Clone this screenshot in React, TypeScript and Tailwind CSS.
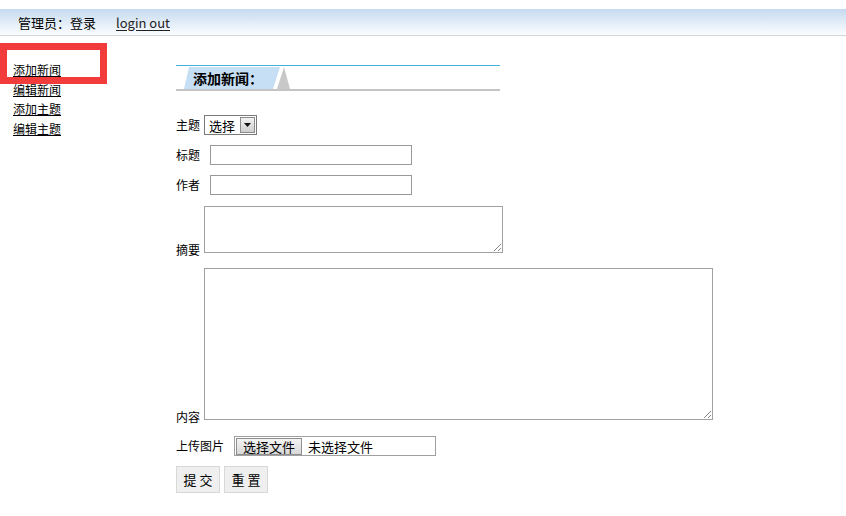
import React from "react";

const font = { fontFamily: '"Noto Sans CJK SC", "Liberation Sans", sans-serif' };

const App = () => {
  return (
    <div className="relative w-[846px] h-[516px] bg-white text-[12px] text-black leading-none" style={font}>
      {/* top bar */}
      <div className="pt-[9px]">
        <div className="h-[27px] flex items-center pl-[18px] gap-[20px] text-[13px] bg-gradient-to-b from-[#c6daef] to-[#fbfdff] border-b border-[#d4d4d4]">
          <span>管理员：登录</span>
          <a href="#" className="underline underline-offset-[2px] text-[#222]">login out</a>
        </div>
      </div>

      <div className="flex">
        {/* sidebar */}
        <div className="w-[176px] pl-[13px] pt-[28px] flex flex-col gap-[7.5px]">
          <a href="#" className="underline underline-offset-[1px] h-[12px]">添加新闻</a>
          <a href="#" className="underline underline-offset-[1px] h-[12px]">编辑新闻</a>
          <a href="#" className="underline underline-offset-[1px] h-[12px]">添加主题</a>
          <a href="#" className="underline underline-offset-[1px] h-[12px]">编辑主题</a>
        </div>

        {/* main */}
        <div className="pt-[29px] flex flex-col">
          <div className="w-[324px] h-[26px] border-t border-b-2 border-t-[#48b0d8] border-b-[#c4c4c4] relative">
            <svg className="absolute left-0 top-[1px]" width="324" height="22">
              <polygon points="13,0 104,0 97,22 8,22" fill="#c6dff4" />
              <polygon points="108,0 114,22 101,22" fill="#c8c8c8" />
            </svg>
            <span className="absolute left-[17px] top-[5px] font-bold text-[14px]">添加新闻：</span>
          </div>

          <div className="mt-[24px] flex items-center h-[20px]">
            <span>主题</span>
            <div className="ml-[4px] w-[53px] h-[20px] border border-[#7a7a7a] flex items-center text-[13px]">
              <span className="pl-[4px] flex-1">选择</span>
              <div className="w-[15px] h-[16px] mr-[1px] bg-gradient-to-b from-[#f2f2f2] to-[#cfcfcf] border border-[#8a8a8a] flex items-center justify-center">
                <svg width="7" height="4"><polygon points="0,0 7,0 3.5,4" fill="#111" /></svg>
              </div>
            </div>
          </div>

          <div className="mt-[10px] flex items-center h-[20px]">
            <span>标题</span>
            <div className="ml-[10px] w-[202px] h-[20px] border border-[#999]" />
          </div>

          <div className="mt-[10px] flex items-center h-[20px]">
            <span>作者</span>
            <div className="ml-[10px] w-[202px] h-[20px] border border-[#999]" />
          </div>

          <div className="mt-[11px] flex items-end">
            <span className="mb-[-3px]">摘要</span>
            <div className="ml-[4px] w-[299px] h-[47px] border border-[#a0a0a0] relative">
              <svg className="absolute right-[1px] bottom-[1px]" width="8" height="8">
                <line x1="1" y1="8" x2="8" y2="1" stroke="#888" />
                <line x1="5" y1="8" x2="8" y2="5" stroke="#888" />
              </svg>
            </div>
          </div>

          <div className="mt-[15px] flex items-end">
            <span className="mb-[-3px]">内容</span>
            <div className="ml-[4px] w-[509px] h-[152px] border border-[#a0a0a0] relative">
              <svg className="absolute right-[1px] bottom-[1px]" width="8" height="8">
                <line x1="1" y1="8" x2="8" y2="1" stroke="#888" />
                <line x1="5" y1="8" x2="8" y2="5" stroke="#888" />
              </svg>
            </div>
          </div>

          <div className="mt-[16px] flex items-center h-[20px]">
            <span>上传图片</span>
            <div className="ml-[10px] w-[202px] h-[20px] border border-[#a0a0a0] flex items-center text-[13px]">
              <div className="ml-[1px] h-[17px] w-[66px] border border-[#8f8f8f] bg-gradient-to-b from-[#f4f4f4] to-[#d8d8d8] flex items-center justify-center">
                选择文件
              </div>
              <span className="ml-[6px]">未选择文件</span>
            </div>
          </div>

          <div className="mt-[10px] flex gap-[4px]">
            <button className="w-[44px] h-[27px] bg-[#efefef] border border-[#d8d8d8] tracking-[3px] pl-[3px] text-[13px]">提交</button>
            <button className="w-[44px] h-[27px] bg-[#efefef] border border-[#d8d8d8] tracking-[3px] pl-[3px] text-[13px]">重置</button>
          </div>
        </div>
      </div>

      {/* red highlight overlay */}
      <div className="absolute left-0 top-[43px] w-[107px] h-[41px] border-[7px] border-[#f23b3b] pointer-events-none" />
    </div>
  );
};

export default App;
